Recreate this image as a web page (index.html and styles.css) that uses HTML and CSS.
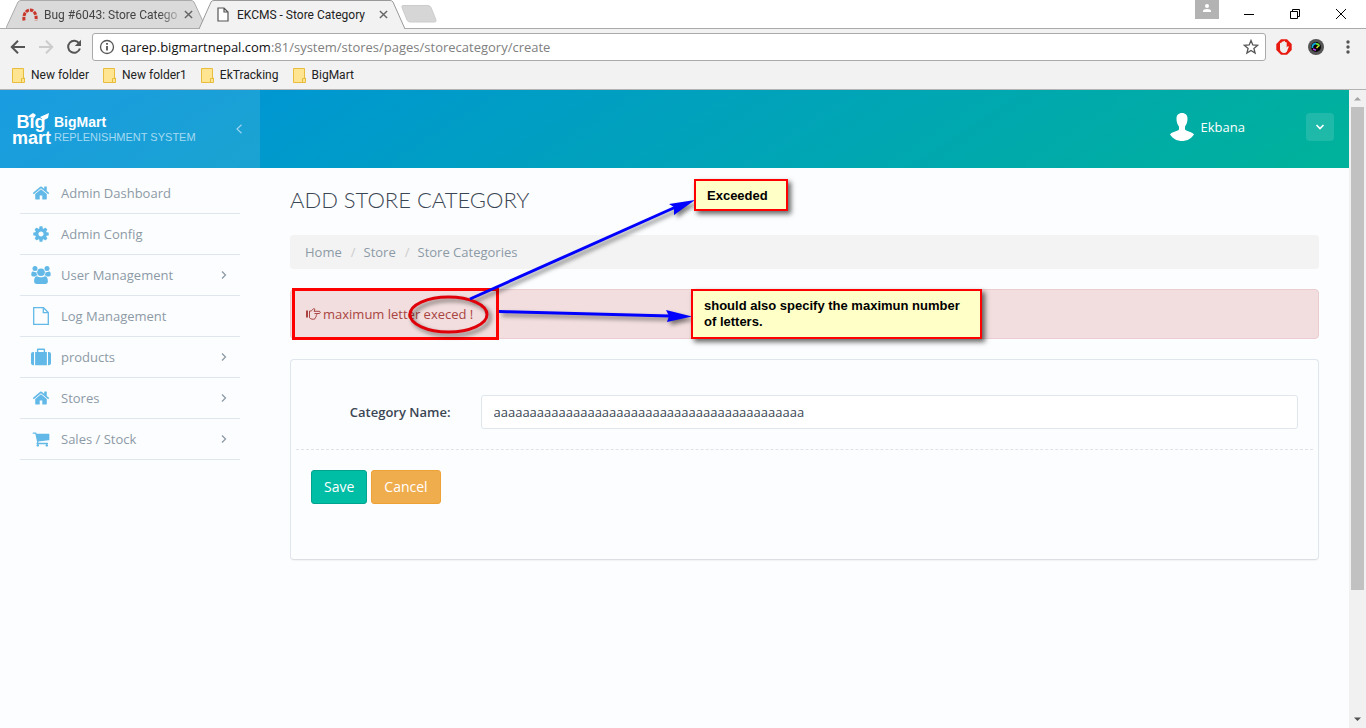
FILE: index.html
```html
<!DOCTYPE html>
<html lang="en">
<head>
<meta charset="utf-8">
<title>EKCMS - Store Category</title>
<link rel="stylesheet" href="styles.css">
</head>
<body>
<svg class="sprite" aria-hidden="true">
  <symbol id="home" viewBox="0 0 1792 1792"><path d="M1472 992v480q0 26-19 45t-45 19h-384v-384h-256v384h-384q-26 0-45-19t-19-45v-480q0-1 .5-3t.5-3l575-474 575 474q1 2 1 6zm223-69l-62 74q-8 9-21 11h-3q-13 0-21-7l-692-577-692 577q-12 8-24 7-13-2-21-11l-62-74q-8-10-7-23.5t11-21.5l719-599q32-26 76-26t76 26l244 204v-195q0-14 9-23t23-9h192q14 0 23 9t9 23v408l219 182q10 8 11 21.5t-7 23.5z"/></symbol>
  <symbol id="cog" viewBox="0 0 1792 1792"><path d="M1152 896q0-106-75-181t-181-75-181 75-75 181 75 181 181 75 181-75 75-181zm512-109v222q0 12-8 23t-20 13l-185 28q-19 54-39 91 35 50 107 138 10 12 10 25t-9 23q-27 37-99 108t-94 71q-12 0-26-9l-138-108q-44 23-91 38-16 136-29 186-7 28-36 28h-222q-14 0-24.5-8.5t-11.5-21.5l-28-184q-49-16-90-37l-141 107q-10 9-25 9-14 0-25-11-126-114-165-168-7-10-7-23 0-12 8-23 15-21 51-66.5t54-70.5q-27-50-41-99l-183-27q-13-2-21-12.5t-8-23.5v-222q0-12 8-23t19-13l186-28q14-46 39-92-40-57-107-138-10-12-10-24 0-10 9-23 26-36 98.5-107.5t94.5-71.5q13 0 26 10l138 107q44-23 91-38 16-136 29-186 7-28 36-28h222q14 0 24.5 8.5t11.5 21.5l28 184q49 16 90 37l142-107q9-9 24-9 13 0 25 10 129 119 165 170 7 8 7 22 0 12-8 23-15 21-51 66.5t-54 70.5q26 50 41 98l183 28q13 2 21 12.5t8 23.5z"/></symbol>
  <symbol id="cart" viewBox="0 0 1792 1792"><path d="M704 1536q0 52-38 90t-90 38-90-38-38-90 38-90 90-38 90 38 38 90zm896 0q0 52-38 90t-90 38-90-38-38-90 38-90 90-38 90 38 38 90zm128-1088v512q0 24-16.5 42.5t-40.5 21.5l-1044 122q13 60 13 70 0 16-24 64h920q26 0 45 19t19 45-19 45-45 19h-1024q-26 0-45-19t-19-45q0-11 8-31.5t16-36 21.5-40 15.5-29.5l-177-823h-204q-26 0-45-19t-19-45 19-45 45-19h256q16 0 28.5 6.5t19.5 15.5 13 24.5 8 26 5.5 29.5 4.5 26h1201q26 0 45 19t19 45z"/></symbol>
  <symbol id="users" viewBox="0 0 20 18"><circle cx="4" cy="2.6" r="2.5"/><circle cx="16" cy="2.6" r="2.5"/><circle cx="10" cy="6.2" r="3.8"/><path d="M5.4 6c-.7.3-2.400.1-3.300-.5C.7 5 .3 7 .3 8.800c0 1.200.700 1.600 1.700 1.600h2.200c.6-.7 1.500-1.100 2.500-1.200C5.700 8.200 5.300 7.200 5.400 6zM14.600 6c.7.3 2.400.1 3.300-.5 1.400-.5 1.800 1.500 1.800 3.300 0 1.200-.7 1.600-1.700 1.600h-2.200c-.6-.7-1.500-1.100-2.500-1.200 1-1 1.400-2 1.300-3.200zM6.300 10.200c1 .6 2.200 1.100 3.700 1.100s2.700-.5 3.700-1.100c2.400 0 3.200 2.400 3.200 5 0 1.800-1.100 2.700-2.600 2.700H5.700c-1.500 0-2.600-.9-2.600-2.700 0-2.600.8-5 3.200-5z"/></symbol>
  <symbol id="file" viewBox="0 0 16 18"><path d="M.7.700h9.800l4.800 4.800v11.800H.7zM10.300 1v4.700h5" fill="none" stroke="currentColor" stroke-width="1.300"/></symbol>
  <symbol id="suitcase" viewBox="0 0 18 16"><path d="M2.700 3.500V15.500H2C.8 15.500 0 14.700 0 13.500v-8c0-1.200.8-2 2-2zM14.300 15.500H3.700v-12H5.300V1.600C5.300.9 5.800.4 6.500.4h5c.7 0 1.200.5 1.200 1.200v1.900h1.600zM11.400 3.500V1.700H6.600v1.800zM18 5.500v8c0 1.200-.8 2-2 2h-.7v-12h.7c1.200 0 2 .8 2 2z"/></symbol>
  <symbol id="right" viewBox="0 0 8 10"><path d="M2 1.500 5.500 5 2 8.500" fill="none" stroke="currentColor" stroke-width="1.300"/></symbol>
  <symbol id="close" viewBox="0 0 10 10"><path d="M1 1 9 9M9 1 1 9" fill="none" stroke="currentColor" stroke-width="1.600"/></symbol>
  <symbol id="folder" viewBox="0 0 13 15"><path d="M.5.500h11V10h1v4.500H.5z" fill="#ffe592" stroke="#e8bd3d"/><path d="M9.500 14v-3.500h3" fill="none" stroke="#e8bd3d"/></symbol>
</svg>

<div class="browser">
  <div class="tabstrip">
    <div class="tab tab-back">
      <svg class="tab-shape" viewBox="0 0 200 29" preserveAspectRatio="none"><path d="M0 28 12 2Q13 .5 15 .5H185Q187 .5 188 2L200 28" fill="#dadada" stroke="#aaa"/></svg>
      <svg class="tab-icon" viewBox="0 0 16 13"><path d="M2 12.500C1 5 5 2 8 2s7 3 6 10.500" fill="none" stroke="#c9372c" stroke-width="3" stroke-dasharray="3.500 1"/></svg>
      <span class="tab-title fade">Bug #6043: Store Catego</span>
      <button class="bare" aria-label="Close tab"><svg class="x"><use href="#close"/></svg></button>
    </div>
    <div class="tab tab-front">
      <svg class="tab-shape" viewBox="0 0 206 29" preserveAspectRatio="none"><path d="M0 29 12 2Q13 .5 15 .5H191Q193 .5 194 2L206 29" fill="#f2f2f2" stroke="#999"/></svg>
      <svg class="tab-icon page" viewBox="0 0 12 15"><path d="M1 1h6l4 4v9H1zM7 1v4h4" fill="#fff" stroke="#555" stroke-width="1.200"/></svg>
      <span class="tab-title">EKCMS - Store Category</span>
      <button class="bare" aria-label="Close tab"><svg class="x"><use href="#close"/></svg></button>
    </div>
    <button class="bare newtab" aria-label="New tab"><svg viewBox="0 0 36 18"><path d="M2 .5H27Q29 .5 30 2.500L35 15Q35.500 17 33.500 17H9Q7 17 6 15L1 2.500Q.5.500 2 .5z" fill="#d6d6d6" stroke="#ccc"/></svg></button>
    <div class="window-buttons">
      <button class="bare profile" aria-label="Profile"><svg viewBox="0 0 24 19"><rect width="24" height="19" fill="#b3b3b3"/><circle cx="12" cy="6" r="2" fill="#fff"/><path d="M8 12V11Q8 9 12 9t4 2v1z" fill="#fff"/></svg></button>
      <button class="bare" aria-label="Minimize"><svg viewBox="0 0 12 12"><path d="M1 6.500H11" stroke="#000"/></svg></button>
      <button class="bare" aria-label="Restore"><svg viewBox="0 0 12 12"><path d="M1.500 3.500h7v7h-7zM3.500 3V1.500h7v7H9" fill="none" stroke="#000"/></svg></button>
      <button class="bare" aria-label="Close"><svg viewBox="0 0 12 12"><path d="M1 1 11 11M11 1 1 11" stroke="#000"/></svg></button>
    </div>
  </div>

  <div class="toolbar">
    <button class="bare nav" aria-label="Back"><svg viewBox="0 0 16 16"><path d="M15 8H2.500M8 1.800 1.800 8 8 14.200" fill="none" stroke="#555" stroke-width="2"/></svg></button>
    <button class="bare nav" aria-label="Forward"><svg viewBox="0 0 16 16"><path d="M1 8H13.500M8 1.800 14.200 8 8 14.200" fill="none" stroke="#ccc" stroke-width="2"/></svg></button>
    <button class="bare nav" aria-label="Reload"><svg viewBox="0 0 16 16"><path d="M13.200 4.500A6 6 0 1 0 13.900 9.500" fill="none" stroke="#555" stroke-width="2"/><path d="M15 .8V7H8.800z" fill="#555"/></svg></button>
    <div class="address">
      <svg class="info" viewBox="0 0 16 16"><circle cx="8" cy="8" r="6.500" fill="none" stroke="#555" stroke-width="1.300"/><path d="M8 7v4.500M8 4v1.700" stroke="#555" stroke-width="1.800"/></svg>
      <span class="url">qarep.bigmartnepal.com<span>:81/system/stores/pages/storecategory/create</span></span>
      <svg class="info" viewBox="0 0 16 16"><path d="M8 1.500 9.800 6l4.900.3-3.800 3.100 1.200 4.700L8 11.500l-4.100 2.600 1.200-4.700L1.300 6.300 6.200 6z" fill="none" stroke="#555" stroke-width="1.300"/></svg>
    </div>
    <button class="bare nav" aria-label="Ad blocker"><svg viewBox="0 0 16 16"><path d="M5 .3h6L15.700 5v6L11 15.700H5L.3 11V5z" fill="#e8190f"/><path d="M4 8V4.200q.9-.8 1.500 0V3q1-.9 1.800 0V2.300q1-.9 1.700 0V3.200q1.200-.7 1.700.3V8.500l1-1.300q1.500-.2 1 .8L10.800 12.800Q9.500 14.300 7.500 14 4 13.200 4 10z" fill="#eee"/></svg></button>
    <button class="bare nav" aria-label="Capture"><svg viewBox="0 0 16 16"><circle cx="8" cy="8" r="8" fill="#555"/><circle cx="8" cy="8" r="5" fill="#080808"/><path d="M4.500 9A3.500 3.500 0 0 1 8 4.500" stroke="#1ad" stroke-width="1.800" fill="none"/><path d="M8 4.800a3 3 0 0 1 3.200 2.500" stroke="#6d3" stroke-width="1.800" fill="none"/><path d="M10.500 7 8.500 9" stroke="#ed2" stroke-width="1.500"/><path d="M5 10 8 11.300" stroke="#b3e" stroke-width="1.500"/></svg></button>
    <button class="bare nav" aria-label="Menu"><svg viewBox="0 0 16 16"><circle cx="8" cy="3" r="1.700" fill="#555"/><circle cx="8" cy="8" r="1.700" fill="#555"/><circle cx="8" cy="13" r="1.700" fill="#555"/></svg></button>
  </div>

  <div class="bookmarks">
    <a href="#"><svg><use href="#folder"/></svg>New folder</a>
    <a href="#"><svg><use href="#folder"/></svg>New folder1</a>
    <a href="#"><svg><use href="#folder"/></svg>EkTracking</a>
    <a href="#"><svg><use href="#folder"/></svg>BigMart</a>
  </div>
</div>

<div class="viewport">
  <div class="site">
    <header class="header">
      <div class="brand">
        <div class="logo">
          <span class="logo-big">Big</span>
          <span class="logo-mart">mart</span>
          <svg viewBox="0 0 39 34"><path d="M16 4 18 2 21 0 24 2 22 5zM28 4 37 0 36 5 32 7z" fill="#fff"/></svg>
        </div>
        <div class="brand-text"><strong>BigMart</strong><span>REPLENISHMENT SYSTEM</span></div>
        <button class="bare collapse" aria-label="Collapse menu"><svg viewBox="0 0 8 10"><path d="M6.500.800 2 5l4.500 4.200" fill="none" stroke="currentColor" stroke-width="1.200"/></svg></button>
      </div>
      <div class="account">
        <svg class="avatar" viewBox="0 0 24 28"><path d="M12 0C8.500 0 6.500 2.300 6.500 5.500 6.500 10 8 12 9 13.500V16.500C7 18.500 2 18.500 0 21.500 3 26 7.500 28 12 28s9-2 12-6.500C22 18.500 17 18.500 15 16.500V13.500C16 12 17.500 10 17.500 5.500 17.500 2.300 15.500 0 12 0z" fill="#fff"/></svg>
        <span>Ekbana</span>
        <button class="bare drop" aria-label="Account menu"><svg viewBox="0 0 10 8"><path d="M1.500 2 5 5.500 8.500 2" fill="none" stroke="#fff" stroke-width="1.600"/></svg></button>
      </div>
    </header>

    <div class="columns">
      <nav class="sidebar">
        <a href="#"><svg class="ico"><use href="#home"/></svg><span>Admin Dashboard</span></a>
        <a href="#"><svg class="ico"><use href="#cog"/></svg><span>Admin Config</span></a>
        <a href="#"><svg class="ico"><use href="#users"/></svg><span>User Management</span><svg class="arrow"><use href="#right"/></svg></a>
        <a href="#"><svg class="ico"><use href="#file"/></svg><span>Log Management</span></a>
        <a href="#"><svg class="ico"><use href="#suitcase"/></svg><span>products</span><svg class="arrow"><use href="#right"/></svg></a>
        <a href="#"><svg class="ico"><use href="#home"/></svg><span>Stores</span><svg class="arrow"><use href="#right"/></svg></a>
        <a href="#"><svg class="ico"><use href="#cart"/></svg><span>Sales / Stock</span><svg class="arrow"><use href="#right"/></svg></a>
      </nav>

      <main class="main">
        <h1>ADD STORE CATEGORY</h1>
        <div class="breadcrumb"><a href="#">Home</a><i>/</i><a href="#">Store</a><i>/</i><a href="#">Store Categories</a></div>
        <div class="alert" role="alert">
          <svg viewBox="0 0 15 12"><path d="M0 2.500h2v7H0z" fill="currentColor"/><path d="M3.500 3h1.700L7.500.8q1.600-.5 1.300 1.200L8 3.300h5.200q1.100.2 1.100 1.100t-1.100 1.100H10.300q1 1.200-.2 2.300.4 1.300-.8 2 0 1.500-1.500 1.400H6q-1.200-.3-2.500-1.400zM10.300 5.500H8.500" fill="none" stroke="currentColor"/></svg>
          <span>maximum letter execed !</span>
        </div>
        <form class="card">
          <div class="field">
            <label for="category">Category Name:</label>
            <input id="category" type="text" value="aaaaaaaaaaaaaaaaaaaaaaaaaaaaaaaaaaaaaaaaaaa">
          </div>
          <div class="actions">
            <button type="button" class="btn save">Save</button>
            <button type="button" class="btn cancel">Cancel</button>
          </div>
        </form>

        <svg class="marks" viewBox="0 0 540 200" aria-hidden="true">
          <rect x="33.500" y="121.500" width="204" height="49" fill="none" stroke="#fe0000" stroke-width="3"/>
          <g class="deep">
            <ellipse cx="188.500" cy="146.500" rx="38.500" ry="17.500" fill="none" stroke="#e0000a" stroke-width="3"/>
            <path d="M210 131 418 38" stroke="#0000fe" stroke-width="3"/>
            <path d="M435 32 409 36 414 39 414 47z" fill="#0000fe"/>
            <path d="M239 143.500 410 148" stroke="#0000fe" stroke-width="3"/>
            <path d="M432 148.500 406 142 409 148 407 154z" fill="#0000fe"/>
          </g>
        </svg>
        <div class="note note-one">Exceeded</div>
        <div class="note note-two">should also specify the maximun number of letters.</div>
      </main>
    </div>
  </div>
  <div class="scroll" aria-hidden="true">
    <svg viewBox="0 0 17 17"><path d="M5 10.500 8.500 7 12 10.500z" fill="#a3a3a3"/></svg>
    <div class="track"><div class="thumb"></div></div>
    <svg viewBox="0 0 17 17"><path d="M5 6.500h7L8.500 10z" fill="#505050"/></svg>
  </div>
</div>
</body>
</html>
```

FILE: styles.css
```css
* { box-sizing: border-box; }
body {
  margin: 0;
  min-height: 100vh;
  display: flex;
  flex-direction: column;
  background: #fcfdfe;
  color: #3b4654;
  font: 13px/20px "Open Sans", sans-serif;
}
a { color: inherit; text-decoration: none; }
svg { display: block; flex: none; }
.sprite { position: absolute; width: 0; height: 0; }
.bare { border: 0; padding: 0; background: none; color: inherit; display: block; }

/* Browser window */
.browser { background: #f2f2f2; border-bottom: 1px solid #b3b3b3; font-family: Roboto, sans-serif; font-size: 12px; color: #222; }
.tabstrip { display: flex; height: 29px; background: #fff; border-bottom: 1px solid #aaa; padding-left: 6px; }
.tab { position: relative; height: 29px; display: flex; align-items: center; padding: 0 12px 0 16px; }
.tab > * { position: relative; }
.tab .tab-shape { position: absolute; inset: 0; width: 100%; height: 100%; }
.tab-back { width: 200px; padding-right: 8px; color: #444; }
.tab-front { width: 206px; margin-left: -7px; padding-left: 18px; z-index: 1; }
.tab-icon { width: 16px; height: 13px; margin-right: 6px; }
.tab-icon.page { width: 12px; height: 15px; margin-right: 8px; }
.tab-title { flex: 1; white-space: nowrap; }
.fade { -webkit-mask-image: linear-gradient(90deg, #000 82%, transparent); mask-image: linear-gradient(90deg, #000 82%, transparent); }
.x { width: 9px; height: 9px; margin-right: 5px; color: #666; }
.newtab svg { width: 36px; height: 18px; margin-left: -4px; }
.window-buttons { margin-left: auto; display: flex; align-items: center; gap: 34px; padding-right: 19px; }
.window-buttons svg { width: 12px; height: 12px; }
.window-buttons .profile { align-self: flex-start; margin-right: -10px; }
.window-buttons .profile svg { width: 24px; height: 19px; }
.toolbar { display: flex; align-items: center; gap: 16px; padding: 4px 10px; height: 36px; }
.toolbar .nav { width: 16px; }
.toolbar .nav:nth-child(-n+2) { margin-right: -4px; }
.toolbar .nav svg { width: 16px; height: 16px; }
.toolbar > .nav:nth-child(3) { margin-right: -6px; }
.address { flex: 1; height: 28px; display: flex; align-items: center; gap: 6px; padding: 0 6px; background: #fff; border: 1px solid #aaa; border-radius: 3px; margin-right: -6px; }
.info { width: 16px; height: 16px; }
.url { flex: 1; font-family: "Open Sans", sans-serif; font-size: 13px; color: #111; }
.url span { color: #808080; }
.bookmarks { display: flex; gap: 14px; height: 24px; padding: 0 12px; }
.bookmarks a { display: flex; align-items: center; gap: 6px; padding-bottom: 4px; }
.bookmarks svg { width: 13px; height: 15px; }

/* Site shell */
.viewport { flex: 1; display: flex; }
.site { flex: 1; min-width: 0; }
.header { height: 78px; display: flex; justify-content: space-between; background: linear-gradient(147deg, #0091de, #00b29a); }
.brand { width: 260px; background: rgba(255, 255, 255, .1); display: flex; align-items: center; padding: 0 17px 0 12px; gap: 4px; }
.logo { position: relative; width: 38px; padding-top: 2px; color: #fff; font-family: "Liberation Sans", Arial, sans-serif; font-weight: 700; }
.logo span { display: block; text-align: center; }
.logo .logo-big { font-size: 18px; line-height: 15px; }
.logo .logo-mart { font-size: 18px; line-height: 16px; }
.logo svg { position: absolute; left: 0; top: 0; width: 39px; height: 34px; }
.brand-text { flex: 1; padding-top: 1px; font-family: "Liberation Sans", Arial, sans-serif; font-size: 11px; line-height: 15px; color: #a5daf2; white-space: nowrap; }
.brand-text strong { display: block; font-size: 14px; line-height: 16px; color: #fff; }
.collapse { color: #9bd4f0; }
.collapse svg { width: 8px; height: 10px; }
.account { display: flex; align-items: center; padding: 0 15px 4px 0; gap: 7px; color: #fff; }
.avatar { width: 24px; height: 28px; }
.drop { width: 28px; height: 28px; margin-left: 54px; border-radius: 4px; background: rgba(255, 255, 255, .12); display: grid; place-items: center; }
.drop svg { width: 10px; height: 8px; }
.columns { display: flex; }
.sidebar { width: 260px; padding: 5px 20px; color: #8c9aa6; }
.sidebar a { display: flex; align-items: center; height: 41px; padding: 0 12px 0 11px; border-bottom: 1px solid #dfe6ee; }
.sidebar span { flex: 1; }
.ico { width: 20px; height: 18px; margin-right: 10px; fill: #62b9e8; color: #62b9e8; }
.arrow { width: 8px; height: 10px; color: #8c9aa6; }

/* Store category form */
.main { position: relative; flex: 1; min-width: 0; padding: 18px 30px 20px; }
h1 { margin: 0 0 21px; font: 300 22px/28px Lato, sans-serif; color: #3b4654; }
.breadcrumb { display: flex; padding: 7px 15px; background: #f3f3f3; border-radius: 4px; color: #8c9aa6; }
.breadcrumb i { padding: 0 8px 0 9px; font-style: normal; color: #ccc; }
.alert { display: flex; align-items: center; gap: 2px; margin: 20px 0; padding: 14px 15px; background: #f2dede; border: 1px solid #ebccd1; border-radius: 4px; color: #a94442; }
.alert svg { width: 15px; height: 12px; }
.card { border: 1px solid #dfe6ee; border-bottom-color: #dcdfe3; border-radius: 4px; padding: 35px 5px 55px; box-shadow: 0 1px 1px rgba(0, 0, 0, .04); }
.field { display: grid; grid-template-columns: 1fr 5fr; align-items: center; padding-bottom: 20px; border-bottom: 1px dashed #dfe3e8; }
.field label { padding-right: 15px; text-align: right; font-weight: 600; }
.field input { height: 34px; min-width: 0; margin: 0 15px; padding: 0 12px; border: 1px solid #dfe6ee; border-radius: 3px; background: #fff; color: #3b4654; font: inherit; }
.actions { display: flex; gap: 4px; padding: 20px 15px 0; }
.btn { height: 34px; padding: 0 12px; border: 1px solid; border-radius: 3px; color: #fff; font: 14px/20px "Open Sans", sans-serif; }
.save { background: #00bda5; border-color: #00a38e; }
.cancel { background: #f0ad4e; border-color: #eea236; }

/* Review marks drawn over the page */
.marks { position: absolute; left: 0; top: 0; width: 540px; height: 200px; pointer-events: none; }
.deep { filter: drop-shadow(3px 3px 2px rgba(0, 0, 0, .5)); }
.note { position: absolute; background: #ffffc8; border: 2px solid #fe0000; box-shadow: 3px 3px 5px rgba(0, 0, 0, .6); color: #000; font: bold 13px/16px "Liberation Sans", Arial, sans-serif; }
.note-one { left: 434px; top: 11px; width: 94px; height: 32px; padding: 7px 11px; }
.note-two { left: 431px; top: 121px; width: 291px; height: 50px; padding: 7px 11px; }

.scroll { width: 17px; display: flex; flex-direction: column; background: #f1f1f1; }
.scroll svg { width: 17px; height: 17px; }
.track { flex: 1; padding: 0 2px; }
.thumb { height: 80%; background: #c1c1c1; }
```
